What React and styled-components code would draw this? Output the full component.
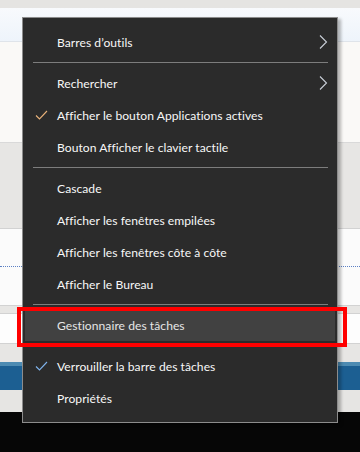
import styled, { createGlobalStyle } from "styled-components";

const GlobalStyle = createGlobalStyle`
  html, body {
    margin: 0;
    padding: 0;
    background: #060606;
  }
  body {
    font-family: Lato, "Open Sans", sans-serif;
  }
`;

const Stage = styled.div`
  position: relative;
  width: 360px;
  height: 452px;
  overflow: hidden;
  display: flex;
  flex-direction: column;
`;

const Band = styled.div`
  position: relative;
  box-sizing: border-box;
  height: ${(p) => p.h}px;
  background: ${(p) => p.bg};
  border-top: ${(p) => (p.top ? `1px solid ${p.top}` : "none")};
  border-bottom: ${(p) => (p.bottom ? `1px solid ${p.bottom}` : "none")};
  flex-shrink: 0;
`;

const Dotted = styled.div`
  margin-top: 37px;
  border-top: 1px dotted #5c80c4;
`;

const Menu = styled.div`
  position: absolute;
  left: 22px;
  top: 17px;
  width: 316px;
  box-sizing: border-box;
  padding: 8px 0;
  background: #2b2b2b;
  border: 1px solid #8c8c8c;
  box-shadow: 3px 2px 3px rgba(0, 0, 0, 0.28);
  display: flex;
  flex-direction: column;
`;

const Item = styled.div`
  display: grid;
  grid-template-columns: 32px 1fr 24px;
  align-items: center;
  height: 32px;
  margin: 0 2px;
  background: ${(p) => (p.active ? "#414141" : "transparent")};
  color: ${(p) => (p.active ? "#e6e6e6" : "#f8f8f8")};
  font-size: 12.1px;
  letter-spacing: 0.05px;
  white-space: nowrap;
`;

const Slot = styled.span`
  display: flex;
  align-items: center;
  justify-content: center;
`;

const Separator = styled.div`
  height: 9px;
  display: flex;
  align-items: center;
  padding: 0 9px 0 10px;
  &::before {
    content: "";
    flex: 1;
    height: 1px;
    background: #7d7d7d;
  }
`;

const Callout = styled.div`
  position: absolute;
  left: 17px;
  top: 307px;
  width: 330px;
  height: 40px;
  box-sizing: border-box;
  border: 4px solid #ff0000;
`;

const Check = ({ color }) => (
  <svg width="13" height="10" viewBox="0 0 13 10">
    <path d="M1 5.5 L4.5 9 L12 1" fill="none" stroke={color} strokeWidth="1.1" />
  </svg>
);

const Chevron = () => (
  <svg width="9" height="14" viewBox="0 0 9 14">
    <path d="M1 0.5 L7.5 7 L1 13.5" fill="none" stroke="#c9cfd8" strokeWidth="1.1" />
  </svg>
);

const groups = [
  [{ label: "Barres d’outils", sub: true }],
  [
    { label: "Rechercher", sub: true },
    { label: "Afficher le bouton Applications actives", check: "#e9b27a" },
    { label: "Bouton Afficher le clavier tactile" },
  ],
  [
    { label: "Cascade" },
    { label: "Afficher les fenêtres empilées" },
    { label: "Afficher les fenêtres côte à côte" },
    { label: "Afficher le Bureau" },
  ],
  [{ label: "Gestionnaire des tâches", active: true }],
  [
    { label: "Verrouiller la barre des tâches", check: "#7fb3ec" },
    { label: "Propriétés" },
  ],
];

const App = () => (
  <>
    <GlobalStyle />
    <Stage>
      <Band h={8} bg="#e5e4e2" />
      <Band h={34} bg="linear-gradient(#f8fafd, #eef4fb)" bottom="#dfe4ea" />
      <Band h={101} bg="#faf9f7" bottom="#d9d9d9" />
      <Band h={85} bg="#e7e6e4" />
      <Band h={77} bg="#fbfbfb" top="#d2d2d2">
        <Dotted />
      </Band>
      <Band h={8} bg="#e7e6e4" top="#d2d2d2" />
      <Band h={31} bg="#fdfdfd" top="#d2d2d2" bottom="#d2d2d2" />
      <Band h={18} bg="#e7e6e4" />
      <Band h={4} bg="#4d8bb2" />
      <Band h={24} bg="#1c5f92" />
      <Band h={22} bg="#e6e5e3" />
      <Band h={40} bg="#060606" />

      <Menu>
        {groups.map((group, gi) => (
          <div key={gi}>
            {gi > 0 && <Separator />}
            {group.map((it) => (
              <Item key={it.label} active={it.active}>
                <Slot>{it.check && <Check color={it.check} />}</Slot>
                <span>{it.label}</span>
                <Slot>{it.sub && <Chevron />}</Slot>
              </Item>
            ))}
          </div>
        ))}
      </Menu>
      <Callout />
    </Stage>
  </>
);

export default App;
